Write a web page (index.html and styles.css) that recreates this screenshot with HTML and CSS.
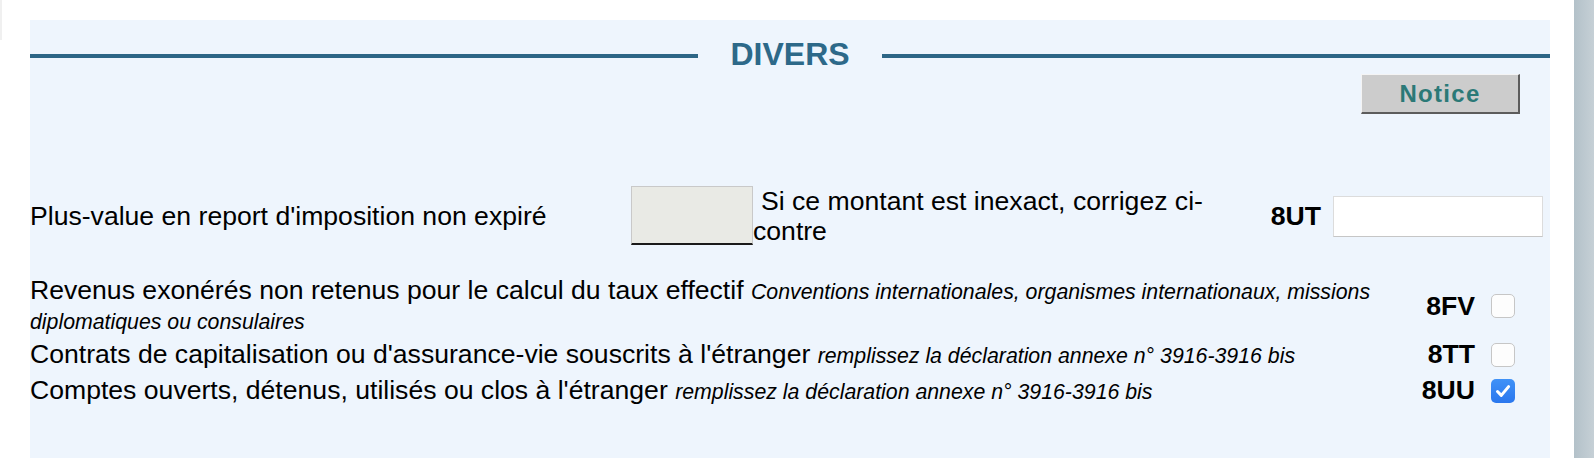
FILE: index.html
```html
<!DOCTYPE html>
<html lang="fr">
<head>
<meta charset="utf-8">
<title>Divers</title>
<link rel="stylesheet" href="styles.css">
</head>
<body>
<div class="page">
  <div class="edge"></div>
  <section class="panel">
    <header class="section-head">
      <span class="rule"></span>
      <h2 class="section-title">DIVERS</h2>
      <span class="rule"></span>
    </header>
    <div class="notice-row">
      <button class="notice-btn" type="button">Notice</button>
    </div>

    <div class="row row-amount">
      <div class="amount-label">Plus-value en report d'imposition non expiré</div>
      <div class="amount-group">
        <div class="prefilled"></div>
        <div class="amount-hint">Si ce montant est inexact, corrigez ci-contre</div>
      </div>
      <div class="code code-ut">8UT</div>
      <input class="amount-input" type="text" aria-label="8UT">
    </div>

    <div class="checks">
      <div class="row row-check">
        <div class="check-label">Revenus exonérés non retenus pour le calcul du taux effectif <em class="note">Conventions internationales, organismes internationaux, missions diplomatiques ou consulaires</em></div>
        <div class="code">8FV</div>
        <span class="cb"></span>
      </div>
      <div class="row row-check">
        <div class="check-label">Contrats de capitalisation ou d'assurance-vie souscrits à l'étranger <em class="note">remplissez la déclaration annexe n° 3916-3916 bis</em></div>
        <div class="code">8TT</div>
        <span class="cb"></span>
      </div>
      <div class="row row-check">
        <div class="check-label">Comptes ouverts, détenus, utilisés ou clos à l'étranger <em class="note">remplissez la déclaration annexe n° 3916-3916 bis</em></div>
        <div class="code">8UU</div>
        <span class="cb cb-checked"><svg viewBox="0 0 24 24" width="24" height="24"><path d="M6.5 12.5 L10.3 16.4 L17.6 7.6" fill="none" stroke="#fff" stroke-width="3" stroke-linecap="round" stroke-linejoin="round"/></svg></span>
      </div>
    </div>
  </section>
  <div class="scrollbar"></div>
</div>
</body>
</html>
```

FILE: styles.css
```css
html, body {
  margin: 0;
  padding: 0;
  background: #ffffff;
}

body {
  font-family: "Liberation Sans", Arial, Helvetica, sans-serif;
  color: #000;
  font-size: 26.6px;
}

.page {
  display: flex;
  align-items: stretch;
  height: 458px;
  width: 1594px;
  overflow: hidden;
}

.edge {
  width: 2px;
  height: 40px;
  background: #f0f0f0;
  flex: none;
}

.panel {
  flex: none;
  width: 1520px;
  margin-left: 28px;
  margin-top: 20px;
  background: #eef5fd;
  display: flex;
  flex-direction: column;
}

.scrollbar {
  flex: none;
  width: 20px;
  margin-left: 24px;
  background: linear-gradient(to right, #b3c1c9, #c6d0d6);
}

/* header */
.section-head {
  display: flex;
  align-items: center;
  height: 36px;
  margin-top: 16px;
}

.rule {
  flex: 1;
  height: 4px;
  margin-top: 4px;
  background: #2d6686;
}

.section-title {
  margin: 0;
  padding: 0 32px;
  font-size: 32px;
  font-weight: bold;
  line-height: 36px;
  color: #2d6989;
}

.notice-row {
  display: flex;
  justify-content: flex-end;
  padding-right: 30px;
  margin-top: 2px;
}

.notice-btn {
  width: 159px;
  height: 40px;
  box-sizing: border-box;
  background: #cccccc;
  border-style: solid;
  border-width: 1px 2px 2px 1px;
  border-color: #f4f4f4 #5c5c5c #5c5c5c #f4f4f4;
  font-family: "Liberation Sans", Arial, sans-serif;
  font-size: 24px;
  font-weight: bold;
  letter-spacing: 1.3px;
  color: #2b7977;
  padding: 0;
}

/* rows */
.row {
  display: flex;
  align-items: center;
}

.row-amount {
  margin-top: 72px;
}

.amount-label {
  width: 601px;
  flex: none;
}

.amount-group {
  display: flex;
  align-items: flex-start;
  width: 592px;
  flex: none;
}

.prefilled {
  width: 122px;
  height: 59px;
  box-sizing: border-box;
  flex: none;
  background: #e9eae5;
  border: 1px solid #c9c9c9;
  border-bottom: 2px solid #1a1a1a;
}

.amount-hint {
  width: 470px;
  text-indent: 8px;
  line-height: 30px;
}

.code {
  font-weight: bold;
  text-align: right;
  flex: none;
}

.code-ut {
  width: 98px;
  margin-right: 12px;
}

.amount-input {
  width: 210px;
  height: 41px;
  box-sizing: border-box;
  background: #ffffff;
  border: 1px solid #dcdcdc;
  border-bottom-color: #c6c6c6;
  margin: 0;
  padding: 0 6px;
  font: inherit;
}

.checks {
  display: flex;
  flex-direction: column;
  gap: 3px;
  margin-top: 30px;
}

.row-check:last-child {
  margin-top: 2px;
}

.check-label {
  width: 1360px;
  flex: none;
  line-height: 28px;
}

.note {
  font-style: italic;
  font-size: 21.3px;
}

.row-check .code {
  width: 85px;
  margin-right: 16px;
}

.cb {
  display: block;
  flex: none;
  width: 24px;
  height: 24px;
  box-sizing: border-box;
  border: 1px solid #c6c6c6;
  border-radius: 5px;
  background: #fdfdfd;
}

.cb-checked {
  border: none;
  background: linear-gradient(to bottom, #4092f7, #2a77ee);
}

.cb svg {
  display: block;
}
```
